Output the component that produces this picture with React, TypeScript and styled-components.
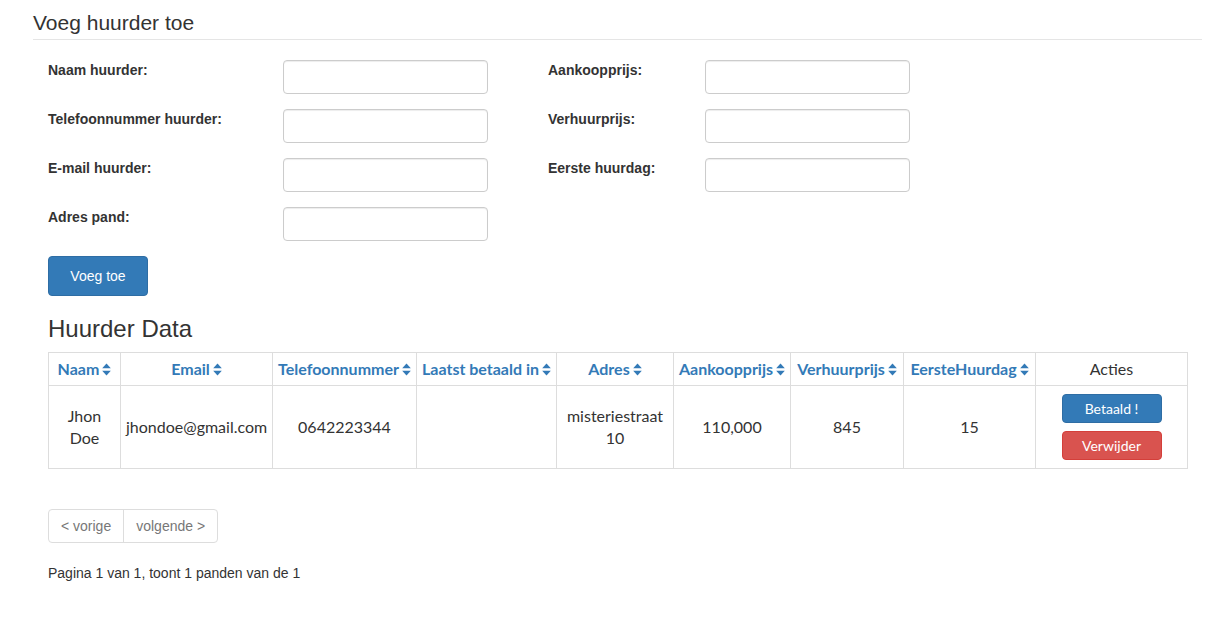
import React from 'react';
import styled, { createGlobalStyle } from 'styled-components';

const GlobalStyle = createGlobalStyle`
  body {
    margin: 0;
    font-family: 'Liberation Sans', Arial, Helvetica, sans-serif;
    font-size: 14px;
    color: #333;
    background: #fff;
  }
  * { box-sizing: border-box; }
`;

const columns = [
  { key: 'naam', label: 'Naam', width: 72 },
  { key: 'email', label: 'Email', width: 152 },
  { key: 'tel', label: 'Telefoonnummer', width: 144 },
  { key: 'laatst', label: 'Laatst betaald in', width: 140 },
  { key: 'adres', label: 'Adres', width: 117 },
  { key: 'aankoop', label: 'Aankoopprijs', width: 117 },
  { key: 'verhuur', label: 'Verhuurprijs', width: 113 },
  { key: 'eerste', label: 'EersteHuurdag', width: 132 },
];

const rows = [
  {
    naam: 'Jhon Doe',
    email: 'jhondoe@gmail.com',
    tel: '0642223344',
    laatst: '',
    adres: 'misteriestraat 10',
    aankoop: '110,000',
    verhuur: '845',
    eerste: '15',
  },
];

function SortIcon() {
  return (
    <svg width="9" height="13" viewBox="0 0 9 13" aria-hidden="true">
      <path d="M4.5 0.5 L8.8 5.3 L0.2 5.3 Z" fill="currentColor" />
      <path d="M4.5 12.5 L8.8 7.7 L0.2 7.7 Z" fill="currentColor" />
    </svg>
  );
}

function App() {
  return (
    <Page>
      <GlobalStyle />
      <Header>Voeg huurder toe</Header>
      <Content>
        <FormGrid>
          <Label>Naam huurder:</Label>
          <Input />
          <span />
          <Label>Aankoopprijs:</Label>
          <Input />

          <Label>Telefoonnummer huurder:</Label>
          <Input />
          <span />
          <Label>Verhuurprijs:</Label>
          <Input />

          <Label>E-mail huurder:</Label>
          <Input />
          <span />
          <Label>Eerste huurdag:</Label>
          <Input />

          <Label>Adres pand:</Label>
          <Input />
        </FormGrid>

        <PrimaryButton>Voeg toe</PrimaryButton>

        <SectionTitle>Huurder Data</SectionTitle>

        <Table>
          <colgroup>
            {columns.map((c) => (
              <col key={c.key} style={{ width: c.width }} />
            ))}
            <col style={{ width: 152 }} />
          </colgroup>
          <thead>
            <tr>
              {columns.map((c) => (
                <SortHeader key={c.key}>
                  {c.label}
                  <SortIcon />
                </SortHeader>
              ))}
              <PlainHeader>Acties</PlainHeader>
            </tr>
          </thead>
          <tbody>
            {rows.map((r, i) => (
              <tr key={i}>
                {columns.map((c) => (
                  <Cell key={c.key}>{(r as Record<string, string>)[c.key]}</Cell>
                ))}
                <Cell>
                  <Actions>
                    <SmallButton $variant="primary">Betaald !</SmallButton>
                    <SmallButton $variant="danger">Verwijder</SmallButton>
                  </Actions>
                </Cell>
              </tr>
            ))}
          </tbody>
        </Table>

        <Pager>
          <PagerItem>&lt; vorige</PagerItem>
          <PagerItem>volgende &gt;</PagerItem>
        </Pager>

        <PageInfo>Pagina 1 van 1, toont 1 panden van de 1</PageInfo>
      </Content>
    </Page>
  );
}

const Page = styled.div`
  padding: 9px 25px 40px 33px;
`;

const Header = styled.h2`
  margin: 0;
  font-size: 21px;
  font-weight: 400;
  line-height: 28px;
  padding-bottom: 2px;
  border-bottom: 1px solid #e5e5e5;
`;

const Content = styled.div`
  padding: 20px 0 0 15px;
`;

const FormGrid = styled.div`
  display: grid;
  grid-template-columns: 235px 205px 60px 157px 205px;
  grid-auto-rows: 34px;
  row-gap: 15px;
  width: max-content;
`;

const Label = styled.label`
  font-size: 14px;
  font-weight: 700;
  padding-top: 2px;
  line-height: 16px;
`;

const Input = styled.input`
  width: 205px;
  height: 34px;
  border: 1px solid #ccc;
  border-radius: 4px;
  box-shadow: inset 0 1px 1px rgba(0, 0, 0, 0.075);
  padding: 6px 12px;
  font-size: 14px;
`;

const PrimaryButton = styled.button`
  display: block;
  margin-top: 15px;
  width: 100px;
  height: 40px;
  border: 1px solid #2e6da4;
  border-radius: 4px;
  background: #337ab7;
  color: #fff;
  font-family: 'Liberation Sans', Arial, sans-serif;
  font-size: 14px;
`;

const SectionTitle = styled.h3`
  margin: 19px 0 9px;
  font-size: 24px;
  font-weight: 400;
  line-height: 28px;
`;

const Table = styled.table`
  border-collapse: collapse;
  table-layout: fixed;
  width: 1139px;
  font-family: Lato, 'Liberation Sans', sans-serif;
  font-size: 16px;

  th, td {
    border: 1px solid #ddd;
    text-align: center;
  }
`;

const SortHeader = styled.th`
  color: #337ab7;
  font-weight: 700;
  padding: 5px 2px 6px;
  height: 33px;
  white-space: nowrap;

  svg {
    margin-left: 3px;
    vertical-align: -1px;
  }
`;

const PlainHeader = styled.th`
  color: #333;
  font-weight: 400;
  padding: 5px 4px 6px;
`;

const Cell = styled.td`
  color: #333;
  padding: 8px 5px;
  height: 83px;
  line-height: 22px;
  vertical-align: middle;
`;

const Actions = styled.div`
  display: flex;
  flex-direction: column;
  align-items: center;
  gap: 8px;
`;

const SmallButton = styled.button<{ $variant: 'primary' | 'danger' }>`
  width: 100px;
  height: 29px;
  border-radius: 4px;
  border: 1px solid ${(p) => (p.$variant === 'primary' ? '#2e6da4' : '#d43f3a')};
  background: ${(p) => (p.$variant === 'primary' ? '#337ab7' : '#d9534f')};
  color: #fff;
  font-family: Lato, 'Liberation Sans', sans-serif;
  font-size: 14px;
`;

const Pager = styled.div`
  display: inline-flex;
  margin-top: 40px;
  border: 1px solid #ddd;
  border-radius: 4px;
`;

const PagerItem = styled.span`
  padding: 0 12px;
  height: 32px;
  line-height: 32px;
  color: #777;
  font-size: 14px;

  & + & {
    border-left: 1px solid #ddd;
  }
`;

const PageInfo = styled.p`
  margin: 22px 0 0;
  font-size: 14px;
`;

export default App;
